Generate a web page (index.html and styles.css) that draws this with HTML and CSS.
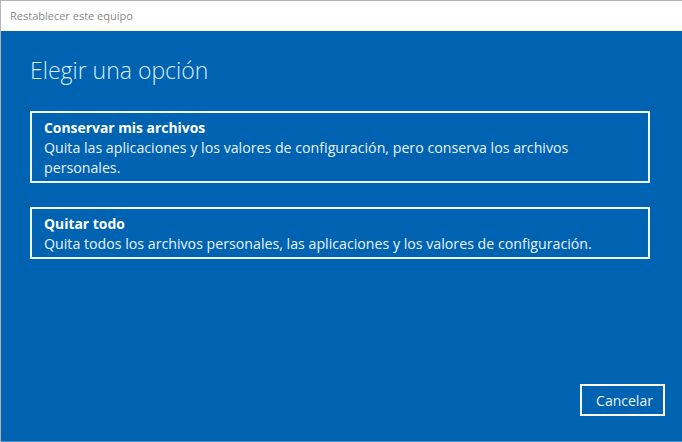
FILE: index.html
```html
<!doctype html>
<html>
<head>
    <title>Restablecer este equipo</title>
    <meta charset="utf-8"/>
    <link rel="stylesheet" href="styles.css">
</head>
<body>
    <div id="window">
        <div class="titlebar">Restablecer este equipo</div>
        <div class="content">
            <h1>Elegir una opción</h1>
            <div class="options">
                <div class="option">
                    <h2>Conservar mis archivos</h2>
                    <p>Quita las aplicaciones y los valores de configuración, pero conserva los archivos personales.</p>
                </div>
                <div class="option">
                    <h2>Quitar todo</h2>
                    <p>Quita todos los archivos personales, las aplicaciones y los valores de configuración.</p>
                </div>
            </div>
            <div class="footer">
                <button class="btn">Cancelar</button>
            </div>
        </div>
    </div>
</body>
</html>
```

FILE: styles.css
```css
*{padding:0;margin:0;box-sizing:border-box;}
html,body{height:100%;}
body{font-family:"Open Sans","Noto Sans",sans-serif;background:#fff;}

#window{
    height:100%;
    display:flex;
    flex-direction:column;
    border-top:1px solid #b4b4b4;
    border-left:1px solid #b4b4b4;
}

/* title bar */
.titlebar{
    height:30px;
    flex:none;
    padding-left:9px;
    line-height:30px;
    font-size:11px;
    color:#8a8a8a;
    background:#fff;
}

/* blue page */
.content{
    flex:1;
    display:flex;
    flex-direction:column;
    background:#0063b1;
    padding:23px 32px 25px 29px;
    color:#fff;
    border-bottom:1px solid #4d92c8;
}
.content h1{
    font-weight:300;
    font-size:23px;
    line-height:32px;
    color:#d7ebf8;
    margin-bottom:25px;
}
.options{
    display:flex;
    flex-direction:column;
    gap:24px;
}
.option{
    border:2px solid #eef5fb;
    padding:5px 12px 3px 12px;
}
.option h2{
    font-size:13.9px;
    font-weight:700;
    line-height:20px;
}
.option p{
    font-size:14.2px;
    line-height:20px;
    color:#e8f2fa;
    max-width:560px;
}

/* footer */
.footer{
    margin-top:auto;
    display:flex;
    justify-content:flex-end;
    margin-right:-15px;
}
.btn{
    width:85px;
    height:32px;
    border:2px solid #fff;
    background:transparent;
    color:#e8f2fa;
    font-family:inherit;
    font-size:14px;
    padding-left:4px;
}
```
